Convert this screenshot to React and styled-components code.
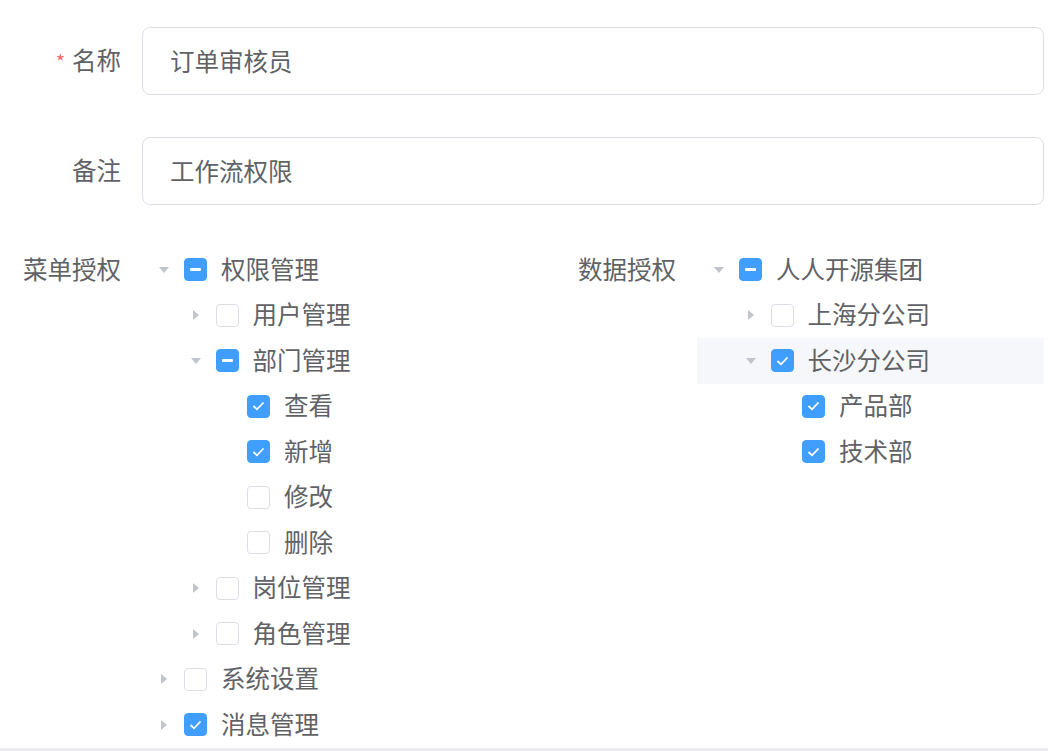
import React from 'react';
import styled, { createGlobalStyle } from 'styled-components';

// 角色编辑表单：名称、备注、菜单授权、数据授权

const menuTree = [
  {
    label: '权限管理',
    state: 'half',
    open: true,
    children: [
      { label: '用户管理', state: 'none', children: [] },
      {
        label: '部门管理',
        state: 'half',
        open: true,
        children: [
          { label: '查看', state: 'checked' },
          { label: '新增', state: 'checked' },
          { label: '修改', state: 'none' },
          { label: '删除', state: 'none' },
        ],
      },
      { label: '岗位管理', state: 'none', children: [] },
      { label: '角色管理', state: 'none', children: [] },
    ],
  },
  { label: '系统设置', state: 'none', children: [] },
  { label: '消息管理', state: 'checked', children: [] },
];

const dataTree = [
  {
    label: '人人开源集团',
    state: 'half',
    open: true,
    children: [
      { label: '上海分公司', state: 'none', children: [] },
      {
        label: '长沙分公司',
        state: 'checked',
        open: true,
        current: true,
        children: [
          { label: '产品部', state: 'checked' },
          { label: '技术部', state: 'checked' },
        ],
      },
    ],
  },
];

function TreeNode({ node, level }) {
  const hasChildren = Array.isArray(node.children);
  return (
    <>
      <NodeRow $level={level} $current={node.current}>
        <Expander>{hasChildren && <Caret $open={node.open} />}</Expander>
        <Checkbox $state={node.state}>
          {node.state === 'checked' && (
            <svg width="13" height="10" viewBox="0 0 13 10">
              <polyline points="1.5,5 5,8.3 11.5,1.5" fill="none" stroke="#fff" strokeWidth="1.8" />
            </svg>
          )}
          {node.state === 'half' && <HalfBar />}
        </Checkbox>
        <NodeLabel>{node.label}</NodeLabel>
      </NodeRow>
      {node.open && node.children.map((c) => <TreeNode key={c.label} node={c} level={level + 1} />)}
    </>
  );
}

function App() {
  return (
    <Page>
      <GlobalStyle />
      <FormItem>
        <Label>
          <Required>*</Required>名称
        </Label>
        <Input defaultValue="订单审核员" />
      </FormItem>
      <FormItem>
        <Label>备注</Label>
        <Input defaultValue="工作流权限" />
      </FormItem>
      <Columns>
        <TreeItem>
          <TreeLabel>菜单授权</TreeLabel>
          <Tree>
            {menuTree.map((n) => (
              <TreeNode key={n.label} node={n} level={0} />
            ))}
          </Tree>
        </TreeItem>
        <TreeItem>
          <TreeLabel>数据授权</TreeLabel>
          <Tree>
            {dataTree.map((n) => (
              <TreeNode key={n.label} node={n} level={0} />
            ))}
          </Tree>
        </TreeItem>
      </Columns>
    </Page>
  );
}

const GlobalStyle = createGlobalStyle`
  html, body {
    margin: 0;
    padding: 0;
    background: #fff;
  }
  body {
    font-family: "Noto Sans CJK SC", "Noto Sans", sans-serif;
    color: #606266;
  }
`;

const Page = styled.div`
  width: 1048px;
  height: 721px;
  padding-top: 27px;
  border-bottom: 3px solid #ebebed;
`;

const FormItem = styled.div`
  display: flex;
  width: 1044px;
  margin-bottom: 42px;
`;

const Label = styled.label`
  width: 142px;
  flex-shrink: 0;
  box-sizing: border-box;
  padding-right: 21px;
  text-align: right;
  line-height: 66px;
  font-size: 24.5px;
  color: #606266;
`;

const Required = styled.span`
  color: #f56c6c;
  margin-right: 7px;
  font-size: 20px;
`;

const Input = styled.input`
  flex: 1;
  height: 68px;
  box-sizing: border-box;
  border: 1.5px solid #dcdfe6;
  border-radius: 8px;
  padding: 0 27px 2px;
  font-family: inherit;
  font-size: 24.5px;
  color: #606266;
  outline: none;
  background: #fff;
`;

const Columns = styled.div`
  display: grid;
  grid-template-columns: 555px 489px;
`;

const TreeItem = styled.div`
  display: flex;
  align-items: flex-start;
`;

const TreeLabel = styled(Label)`
  line-height: 44px;
`;

const Tree = styled.div`
  flex: 1;
  display: flex;
  flex-direction: column;
`;

const NodeRow = styled.div`
  display: flex;
  align-items: center;
  height: 45.5px;
  padding-left: ${(p) => p.$level * 31.5}px;
  background: ${(p) => (p.$current ? '#f5f7fa' : 'transparent')};
`;

const Expander = styled.span`
  width: 42px;
  height: 42px;
  flex-shrink: 0;
  display: flex;
  align-items: center;
  justify-content: center;
`;

const Caret = styled.span`
  width: 0;
  height: 0;
  border-top: 5px solid transparent;
  border-bottom: 5px solid transparent;
  border-left: 6px solid #c0c4cc;
  margin-left: 2px;
  transform: rotate(${(p) => (p.$open ? '90deg' : '0deg')});
`;

const Checkbox = styled.span`
  width: 23px;
  height: 23px;
  flex-shrink: 0;
  box-sizing: border-box;
  border-radius: 4px;
  border: 1.5px solid ${(p) => (p.$state === 'none' ? '#dcdfe6' : '#409eff')};
  background: ${(p) => (p.$state === 'none' ? '#fff' : '#409eff')};
  display: flex;
  align-items: center;
  justify-content: center;
  margin-right: 14px;
`;

const HalfBar = styled.span`
  width: 11px;
  height: 3px;
  border-radius: 1px;
  background: #fff;
`;

const NodeLabel = styled.span`
  font-size: 24.5px;
  color: #606266;
  white-space: nowrap;
  padding-bottom: 3px;
`;

export default App;
